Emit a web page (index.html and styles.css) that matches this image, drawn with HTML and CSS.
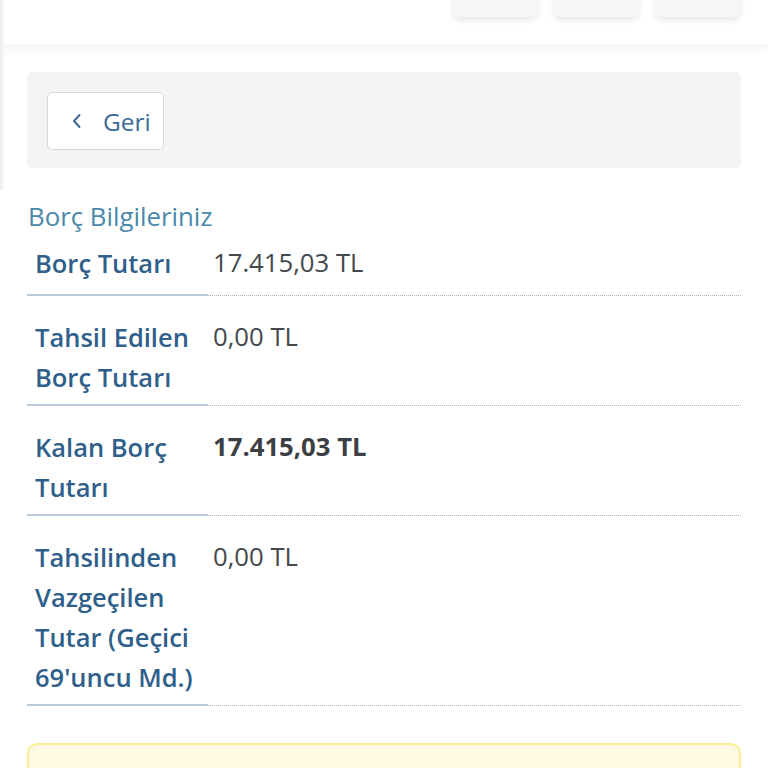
FILE: index.html
```html
<!DOCTYPE html>
<html lang="tr">
<head>
<meta charset="utf-8">
<link rel="stylesheet" href="styles.css">
</head>
<body>
<div class="edge"></div>
<header class="topbar">
  <div class="tb-btn"></div>
  <div class="tb-btn"></div>
  <div class="tb-btn"></div>
</header>
<main class="content">
  <div class="panel">
    <button class="back">
      <svg class="chev" width="10" height="16" viewBox="0 0 10 16"><path d="M7.5 2 L2 8 L7.5 14" fill="none" stroke="#3b6a96" stroke-width="2" stroke-linecap="round" stroke-linejoin="round"/></svg>
      <span>Geri</span>
    </button>
  </div>
  <h2 class="title">Borç Bilgileriniz</h2>
  <div class="table">
    <div class="row first">
      <div class="label">Borç Tutarı</div>
      <div class="value">17.415,03 TL</div>
    </div>
    <div class="row">
      <div class="label">Tahsil Edilen Borç Tutarı</div>
      <div class="value">0,00 TL</div>
    </div>
    <div class="row">
      <div class="label">Kalan Borç Tutarı</div>
      <div class="value bold">17.415,03 TL</div>
    </div>
    <div class="row">
      <div class="label">Tahsilinden Vazgeçilen Tutar (Geçici 69'uncu Md.)</div>
      <div class="value">0,00 TL</div>
    </div>
  </div>
  <div class="note"></div>
</main>
</body>
</html>
```
FILE: styles.css
```css
html, body {
  margin: 0;
  padding: 0;
  background: #ffffff;
  font-family: "Open Sans", "Noto Sans", sans-serif;
  overflow: hidden;
  height: 768px;
}
.edge {
  position: absolute;
  left: 0;
  top: 0;
  width: 4px;
  height: 190px;
  background: linear-gradient(to right, #ececec, #f8f8f8);
}
.topbar {
  height: 44px;
  background: #ffffff;
  box-shadow: 0 4px 10px rgba(0, 0, 0, 0.06);
  display: flex;
  justify-content: flex-end;
  align-items: flex-start;
  gap: 16px;
  padding-right: 28px;
}
.tb-btn {
  width: 85px;
  height: 30px;
  margin-top: -13px;
  background: #f5f6f8;
  border-radius: 7px;
  box-shadow: 0 3px 6px rgba(0, 0, 0, 0.1);
}
.content {
  padding: 0 27px;
}
.panel {
  margin-top: 28px;
  background: #f3f4f6;
  border-radius: 5px;
  padding: 20px;
  height: 56px;
}
.back {
  display: flex;
  align-items: center;
  width: 117px;
  height: 58px;
  padding: 0 0 0 24px;
  background: #ffffff;
  border: 1px solid #d5d9de;
  border-radius: 5px;
  font-family: "Open Sans", sans-serif;
  font-size: 24.5px;
  font-weight: 500;
  color: #3b6a96;
  gap: 21px;
}
.chev { display: block; }
.title {
  margin: 30px 0 0 1px;
  font-size: 25.8px;
  line-height: 36px;
  font-weight: 400;
  color: #4b88aa;
}
.row {
  display: flex;
  padding: 21px 0 0;
  line-height: 40px;
}
.row.first { padding-top: 9px; }
.label {
  width: 173px;
  flex: none;
  padding: 0 0 7px 8px;
  font-size: 25.5px;
  font-weight: 600;
  color: #2f5f8a;
  border-bottom: 2px solid #b9cadb;
}
.value {
  flex: 1;
  padding: 0 0 8px 5px;
  font-size: 25.7px;
  color: #44484c;
  border-bottom: 1px dotted #b0b4b8;
}
.row.first .label { padding-bottom: 11px; }
.row.first .value { padding-bottom: 12px; }
.value.bold { font-weight: 700; color: #3c4044; }
.note {
  margin-top: 37px;
  height: 60px;
  background: #fff9e3;
  border: 2px solid #f8ec95;
  border-radius: 10px;
}
```
